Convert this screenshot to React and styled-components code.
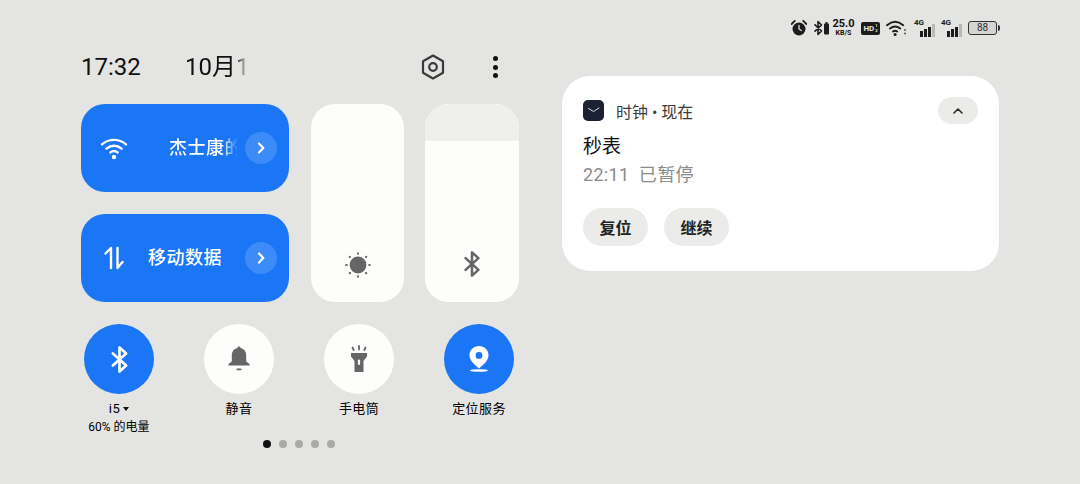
import React from 'react'
import styled, { createGlobalStyle } from 'styled-components'

const GlobalStyle = createGlobalStyle`
  html, body { margin: 0; padding: 0; background: #e4e4e2; }
  * { box-sizing: border-box; }
  body { font-family: Roboto, "Noto Sans CJK SC", sans-serif; }
`

const BluetoothIcon = ({ size = 24, color = '#fff', width = 2.2 }) => (
  <svg width={size} height={size} viewBox="0 0 24 24" fill="none" stroke={color} strokeWidth={width} strokeLinejoin="round" strokeLinecap="round">
    <path d="m6.5 7 11 10-5.5 5V2l5.500 5-11 10" />
  </svg>
)

const Chevron = () => (
  <svg width="14" height="14" viewBox="0 0 14 14" fill="none" stroke="#fff" strokeWidth="2.2" strokeLinecap="round" strokeLinejoin="round">
    <path d="m5 2.500 4.300 4.500L5 11.500" />
  </svg>
)

const WifiBig = () => (
  <svg width="28" height="24" viewBox="0 0 28 24" fill="none" stroke="#fff" strokeWidth="2.400" strokeLinecap="round">
    <path d="M2 8.400c7-6 17-6 24 0" />
    <path d="M6.400 12.600c4.500-3.800 10.700-3.800 15.200 0" />
    <path d="M10.400 16.400c2.200-1.700 5-1.700 7.200 0" />
    <circle cx="14" cy="21" r="2.200" fill="#fff" stroke="none" />
  </svg>
)

const DataArrows = () => (
  <svg width="22" height="24" viewBox="0 0 22 24" fill="none" stroke="#fff" strokeWidth="2.400" strokeLinecap="round" strokeLinejoin="round">
    <path d="M2.500 7.500 8 2v20" />
    <path d="M14.500 2v20l5-6" />
  </svg>
)

const SunIcon = () => (
  <svg width="26" height="26" viewBox="0 0 26 26" fill="#666">
    <circle cx="13" cy="13" r="8.400" />
    <g stroke="#666" strokeWidth="2" strokeLinecap="round">
      <path d="M13 1.200v.6M13 24.200v.6M1.200 13h.6M24.200 13h.6M4.700 4.700l.4.4M20.900 20.900l.4.4M4.700 21.300l.4-.4M20.900 5.100l.4-.4" />
    </g>
  </svg>
)

const BellIcon = () => (
  <svg width="24" height="26" viewBox="0 0 24 26" fill="#666">
    <path d="M12 0.500c.9 0 1.500.6 1.600 1.500 3.600.8 5.600 3.700 5.600 7.500v6l3.300 2.400v1.600H1.500v-1.600l3.300-2.400v-6c0-3.800 2-6.700 5.600-7.500C10.500 1.100 11.100.5 12 .5Z" />
    <rect x="9.500" y="22.500" width="5" height="1.800" rx=".9" />
  </svg>
)

const TorchIcon = () => (
  <svg width="20" height="28" viewBox="0 0 20 28" fill="#666">
    <g stroke="#666" strokeWidth="1.800" strokeLinecap="round">
      <path d="M10 1v3.500M3.500 2.500l1.200 2.500M16.500 2.500l-1.200 2.500" />
    </g>
    <path d="M2 8h16v3.500l-3.500 4.500v11h-9V16L2 11.500Z" />
    <rect x="8.900" y="14.500" width="2.200" height="5.500" rx="1.100" fill="#fff" />
  </svg>
)

const PinIcon = () => (
  <svg width="26" height="28" viewBox="0 0 26 28" fill="none">
    <path fillRule="evenodd" fill="#fff" d="M13 1c5.400 0 9.500 4 9.500 9.200 0 5.300-5 9.300-9.500 13.300-4.500-4-9.500-8-9.500-13.300C3.500 5 7.600 1 13 1Zm0 6a3.400 3.400 0 1 0 0 6.800A3.400 3.400 0 0 0 13 7Z" />
    <ellipse cx="13" cy="25.500" rx="9" ry="1.300" fill="#fff" />
  </svg>
)

const HexIcon = () => (
  <svg width="26" height="28" viewBox="0 0 26 28" fill="none" stroke="#3a3a3a" strokeWidth="2.200" strokeLinejoin="round">
    <path d="M13 2.500 23 8.200v11.600l-10 5.700-10-5.700V8.200Z" />
    <circle cx="13" cy="14" r="3.800" />
  </svg>
)

const AlarmIcon = () => (
  <svg width="16" height="16" viewBox="0 0 16 16">
    <circle cx="8" cy="9" r="6.500" fill="#1c1c1c" />
    <path d="M8 5.500V9l2.300 1.500" stroke="#e4e4e2" strokeWidth="1.300" fill="none" strokeLinecap="round" />
    <path d="M.6 4 3.800.9M15.400 4 12.200.9" stroke="#1c1c1c" strokeWidth="1.800" strokeLinecap="round" />
  </svg>
)

const WifiSmall = () => (
  <svg width="22" height="16" viewBox="0 0 22 16" fill="none" stroke="#1c1c1c" strokeWidth="1.900" strokeLinecap="round">
    <path d="M1 5.200c5.200-4.300 11-4.300 16.200 0" />
    <path d="M4 8.500c3.400-2.700 6.800-2.700 10.200 0" />
    <path d="M7 11.500c1.400-1 2.800-1 4.200 0" />
    <circle cx="9.100" cy="14.400" r="1.500" fill="#1c1c1c" stroke="none" />
    <path d="M19 10v.1M19 13.500v.1" strokeWidth="2" stroke="#555" />
  </svg>
)

const BtBattery = () => (
  <svg width="17" height="16" viewBox="0 0 17 16">
    <path d="m1.500 4.300 7 6.700-3.500 3.500V1.500L8.500 5l-7 6.700" fill="none" stroke="#1c1c1c" strokeWidth="1.600" strokeLinejoin="round" />
    <rect x="11" y="3.500" width="5" height="11" rx="1" fill="#1c1c1c" />
    <rect x="12.500" y="2" width="2" height="2" fill="#1c1c1c" />
  </svg>
)

const SignalBars = () => (
  <BarsWrap>
    <Bar $h={6} />
    <Bar $h={8} />
    <Bar $h={10} />
    <Bar $h={13} $off />
  </BarsWrap>
)

const App = () => {
  return (
    <>
      <GlobalStyle />
      <Page>
        <StatusBar>
          <AlarmIcon />
          <BtBattery />
          <Speed>
            <SpeedNum>25.0</SpeedNum>
            <SpeedUnit>KB/S</SpeedUnit>
          </Speed>
          <HdBadge>HD<HdSub>1<br />2</HdSub></HdBadge>
          <WifiSmall />
          <Signal><SignalTag>4G</SignalTag><SignalBars /></Signal>
          <Signal><SignalTag>4G</SignalTag><SignalBars /></Signal>
          <Battery><BatteryBody>88</BatteryBody><BatteryTip /></Battery>
        </StatusBar>

        <Main>
          <Controls>
            <Header>
              <Time>17:32</Time>
              <DateText>10月1</DateText>
              <HeaderActions>
                <HexIcon />
                <MoreDots><i /><i /><i /></MoreDots>
              </HeaderActions>
            </Header>

            <Tiles>
              <WideTiles>
                <Tile>
                  <TileIcon><WifiBig /></TileIcon>
                  <TileLabel $marquee>杰士康的</TileLabel>
                  <TileArrow><Chevron /></TileArrow>
                </Tile>
                <Tile>
                  <TileIcon><DataArrows /></TileIcon>
                  <TileLabel>移动数据</TileLabel>
                  <TileArrow><Chevron /></TileArrow>
                </Tile>
              </WideTiles>
              <Slider $w={93}>
                <SliderFill><SunIcon /></SliderFill>
              </Slider>
              <Slider $w={94}>
                <SliderCap $height={37} />
                <SliderFill><BluetoothIcon size={28} color="#666" width={2.2} /></SliderFill>
              </Slider>
            </Tiles>

            <Toggles>
              <Toggle>
                <Round $on><BluetoothIcon size={29} width={2.200} /></Round>
                <ToggleLabel>i5<Caret /></ToggleLabel>
                <ToggleSub>60% 的电量</ToggleSub>
              </Toggle>
              <Toggle>
                <Round><BellIcon /></Round>
                <ToggleLabel>静音</ToggleLabel>
              </Toggle>
              <Toggle>
                <Round><TorchIcon /></Round>
                <ToggleLabel>手电筒</ToggleLabel>
              </Toggle>
              <Toggle>
                <Round $on><PinIcon /></Round>
                <ToggleLabel>定位服务</ToggleLabel>
              </Toggle>
            </Toggles>

            <Pager>
              <PagerDot $active />
              <PagerDot />
              <PagerDot />
              <PagerDot />
              <PagerDot />
            </Pager>
          </Controls>

          <Card>
            <CardHead>
              <AppIcon>
                <svg width="21" height="21" viewBox="0 0 21 21" fill="none" stroke="#d8dae0" strokeWidth="1" strokeLinecap="round">
                  <path d="M5.500 8.500 10.500 11.500 16 8" />
                </svg>
              </AppIcon>
              <AppName>时钟 • 现在</AppName>
              <Collapse>
                <svg width="12" height="8" viewBox="0 0 12 8" fill="none" stroke="#2a2a2a" strokeWidth="1.600" strokeLinecap="round" strokeLinejoin="round">
                  <path d="m2 6 4-4 4 4" />
                </svg>
              </Collapse>
            </CardHead>
            <CardTitle>秒表</CardTitle>
            <CardText>22:11&nbsp;&nbsp;已暂停</CardText>
            <CardActions>
              <PillButton>复位</PillButton>
              <PillButton>继续</PillButton>
            </CardActions>
          </Card>
        </Main>
      </Page>
    </>
  )
}

export default App

const Page = styled.div`
  width: 1080px;
  height: 484px;
  overflow: hidden;
  padding-top: 18px;
  background: #e4e4e2;
  color: #111;
`
const StatusBar = styled.div`
  height: 20px;
  display: flex;
  align-items: center;
  justify-content: flex-end;
  gap: 6px;
  padding-right: 80px;
`
const Speed = styled.div`
  display: flex;
  flex-direction: column;
  align-items: center;
  width: 23px;
  margin-left: -4px;
  font-weight: 700;
  line-height: 1;
`
const SpeedNum = styled.span`
  font-size: 11px;
  line-height: 10px;
`
const SpeedUnit = styled.span`
  font-size: 7px;
  line-height: 8px;
`
const HdBadge = styled.div`
  width: 19px;
  height: 13px;
  border-radius: 2px;
  background: #1c1c1c;
  color: #e4e4e2;
  font-size: 8px;
  font-weight: 700;
  display: flex;
  align-items: center;
  justify-content: center;
  gap: 1px;
`
const HdSub = styled.span`
  font-size: 4px;
  line-height: 5px;
`
const Signal = styled.div`
  position: relative;
  width: 21px;
  height: 17px;
  display: flex;
  align-items: flex-end;
  justify-content: flex-end;
`
const SignalTag = styled.span`
  position: absolute;
  left: 0;
  top: -1px;
  font-size: 8px;
  font-weight: 700;
  line-height: 8px;
  color: #1c1c1c;
`
const BarsWrap = styled.div`
  display: flex;
  align-items: flex-end;
  gap: 1px;
`
const Bar = styled.span`
  width: 3px;
  height: ${p => p.$h}px;
  background: ${p => (p.$off ? '#b9b9b7' : '#1c1c1c')};
`
const Battery = styled.div`
  display: flex;
  align-items: center;
`
const BatteryBody = styled.div`
  width: 29px;
  height: 14px;
  border: 1.200px solid #333;
  border-radius: 3px;
  background: #d4d4d2;
  font-size: 10px;
  line-height: 12px;
  text-align: center;
  color: #333;
`
const BatteryTip = styled.span`
  width: 2px;
  height: 6px;
  margin-left: 1px;
  border-radius: 0 2px 2px 0;
  background: #333;
`
const Main = styled.div`
  display: flex;
  gap: 43px;
  padding-left: 81px;
  margin-top: 12px;
`
const Controls = styled.div`
  width: 438px;
`
const Header = styled.div`
  height: 34px;
  display: flex;
  align-items: center;
`
const Time = styled.div`
  width: 104px;
  font-size: 24px;
  line-height: 34px;
`
const DateText = styled.div`
  font-size: 24px;
  line-height: 34px;
  width: 66px;
  white-space: nowrap;
  background: linear-gradient(to right, #111 50px, #d0d0ce 62px);
  -webkit-background-clip: text;
  background-clip: text;
  color: transparent;
`
const HeaderActions = styled.div`
  margin-left: auto;
  display: flex;
  align-items: center;
  gap: 47px;
  padding-right: 21px;
`
const MoreDots = styled.div`
  display: flex;
  flex-direction: column;
  gap: 3.500px;

  i {
    display: block;
    width: 5px;
    height: 5px;
    border-radius: 50%;
    background: #111;
  }
`
const Tiles = styled.div`
  display: flex;
  gap: 21px;
  margin-top: 20px;
  height: 198px;
`
const WideTiles = styled.div`
  width: 208px;
  margin-right: 1px;
  display: flex;
  flex-direction: column;
  justify-content: space-between;
`
const Tile = styled.div`
  height: 88px;
  border-radius: 24px;
  background: #1b76f6;
  color: #fff;
  display: flex;
  align-items: center;
  padding: 0 12px 0 19px;
`
const TileIcon = styled.div`
  width: 28px;
  display: flex;
  justify-content: center;
`
const TileLabel = styled.div`
  flex: 1;
  min-width: 0;
  font-size: 18px;
  font-weight: 500;
  letter-spacing: 0.5px;
  line-height: 24px;
  white-space: nowrap;
  overflow: hidden;
  text-align: ${p => (p.$marquee ? 'left' : 'center')};
  padding-left: ${p => (p.$marquee ? '41px' : '0')};
  padding-right: ${p => (p.$marquee ? '0' : '3px')};
  margin-right: ${p => (p.$marquee ? '7px' : '0')};
  ${p => p.$marquee && 'mask-image: linear-gradient(to right, #000 calc(100% - 16px), transparent);'}
`
const TileArrow = styled.div`
  width: 32px;
  height: 32px;
  border-radius: 50%;
  background: #3d8bf8;
  display: flex;
  align-items: center;
  justify-content: center;
`
const Slider = styled.div`
  width: ${p => p.$w}px;
  border-radius: 24px;
  overflow: hidden;
  display: flex;
  flex-direction: column;
  background: #fff;
`
const SliderCap = styled.div`
  height: ${p => p.$height}px;
  background: #efefee;
`
const SliderFill = styled.div`
  flex: 1;
  background: #fdfdfc;
  display: flex;
  align-items: flex-end;
  justify-content: center;
  padding-bottom: 24px;
`
const Toggles = styled.div`
  display: flex;
  gap: 50px;
  padding-left: 3px;
  margin-top: 22px;
`
const Toggle = styled.div`
  width: 70px;
  display: flex;
  flex-direction: column;
  align-items: center;
`
const Round = styled.div`
  width: 70px;
  height: 70px;
  border-radius: 50%;
  background: ${p => (p.$on ? '#1b76f6' : '#fdfdfc')};
  display: flex;
  align-items: center;
  justify-content: center;
  margin-bottom: 6px;
`
const ToggleLabel = styled.div`
  font-size: 13px;
  letter-spacing: 0.4px;
  line-height: 18px;
  white-space: nowrap;
  color: #000;
  display: flex;
  align-items: center;
`
const Caret = styled.span`
  width: 0;
  height: 0;
  margin-left: 3px;
  border-left: 3px solid transparent;
  border-right: 3px solid transparent;
  border-top: 4px solid #111;
`
const ToggleSub = styled.div`
  font-size: 12px;
  line-height: 18px;
  white-space: nowrap;
  color: #000;
`
const Pager = styled.div`
  display: flex;
  justify-content: center;
  align-items: center;
  gap: 8px;
  height: 8px;
  margin-top: 4px;
  padding-right: 2px;
`
const PagerDot = styled.span`
  width: 8px;
  height: 8px;
  border-radius: 50%;
  background: ${p => (p.$active ? '#111' : '#a9a9a8')};
`
const Card = styled.div`
  width: 437px;
  height: 195px;
  margin-top: 26px;
  border-radius: 28px;
  background: #fff;
  padding: 21px 21px 0;
`
const CardHead = styled.div`
  height: 27px;
  display: flex;
  align-items: center;
`
const AppIcon = styled.div`
  width: 21px;
  height: 21px;
  border-radius: 5px;
  background: #1c2133;
  display: flex;
`
const AppName = styled.div`
  margin-left: 12px;
  font-size: 16px;
  color: #3c3c3c;
`
const Collapse = styled.div`
  margin-left: auto;
  width: 40px;
  height: 27px;
  border-radius: 14px;
  background: #ebebea;
  display: flex;
  align-items: center;
  justify-content: center;
`
const CardTitle = styled.div`
  margin-top: 10px;
  font-size: 19px;
  line-height: 26px;
  color: #111;
`
const CardText = styled.div`
  margin-top: 2px;
  font-size: 18px;
  letter-spacing: 0.3px;
  line-height: 26px;
  color: #8b8b8b;
`
const CardActions = styled.div`
  display: flex;
  gap: 16px;
  margin-top: 20px;
`
const PillButton = styled.div`
  width: 65px;
  height: 38px;
  border-radius: 19px;
  background: #ebebea;
  font-size: 16px;
  font-weight: 700;
  color: #222;
  display: flex;
  align-items: center;
  justify-content: center;
`
